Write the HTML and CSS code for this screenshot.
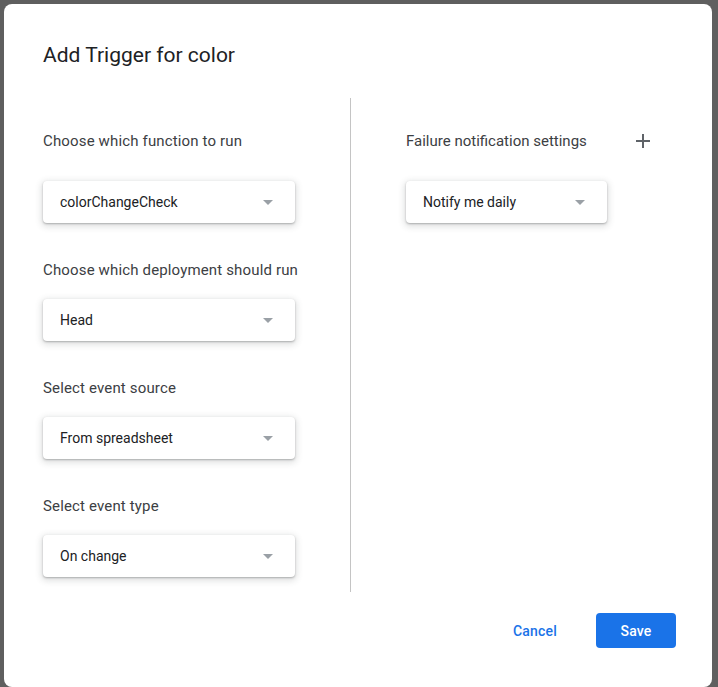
FILE: index.html
```html
<!DOCTYPE html>
<html>
<head>
<meta charset="utf-8">
<link rel="stylesheet" href="styles.css">
</head>
<body>
<div class="dialog">
  <h1 class="title">Add Trigger for color</h1>
  <div class="columns">
    <div class="col col-left">
      <div class="field field-first">
        <div class="label">Choose which function to run</div>
        <div class="select"><span>colorChangeCheck</span><span class="arrow"></span></div>
      </div>
      <div class="field">
        <div class="label">Choose which deployment should run</div>
        <div class="select"><span>Head</span><span class="arrow"></span></div>
      </div>
      <div class="field">
        <div class="label">Select event source</div>
        <div class="select"><span>From spreadsheet</span><span class="arrow"></span></div>
      </div>
      <div class="field">
        <div class="label">Select event type</div>
        <div class="select"><span>On change</span><span class="arrow"></span></div>
      </div>
    </div>
    <div class="divider"></div>
    <div class="col col-right">
      <div class="field field-first">
        <div class="label label-row">Failure notification settings
          <svg class="plus" width="14" height="14" viewBox="0 0 14 14"><path d="M7 0v14M0 7h14" stroke="#5f6368" stroke-width="2" fill="none"/></svg>
        </div>
        <div class="select select-short"><span>Notify me daily</span><span class="arrow"></span></div>
      </div>
    </div>
  </div>
  <div class="footer">
    <button class="btn btn-text">Cancel</button>
    <button class="btn btn-primary">Save</button>
  </div>
</div>
</body>
</html>
```

FILE: styles.css
```css
* { box-sizing: border-box; }
html, body { margin: 0; padding: 0; }
body {
  background: #5f5f5f;
  width: 718px;
  height: 687px;
  overflow: hidden;
  padding: 4px 0 0 4px;
  font-family: Roboto, "Liberation Sans", Arial, sans-serif;
}
.dialog {
  width: 708px;
  height: 683px;
  background: #fff;
  border-radius: 8px;
  padding: 0 36px 0 39px;
  display: flex;
  flex-direction: column;
}
.title {
  margin: 0;
  padding-top: 39px;
  font-size: 21px;
  line-height: 24px;
  font-weight: 400;
  color: #202124;
  height: 94px;
}
.columns {
  display: flex;
  height: 494px;
}
.col {
  display: flex;
  flex-direction: column;
  padding-top: 32px;
  gap: 36px;
}
.col-left { width: 307px; padding-right: 55px; }
.col-right { padding-left: 55px; flex: 1; }
.divider {
  width: 1px;
  background: #c4c4c4;
}
.field { display: flex; flex-direction: column; gap: 18px; }
.field-first { gap: 29px; }
.label {
  font-size: 15px;
  line-height: 22px;
  color: #3c4043;
  white-space: nowrap;
  letter-spacing: .15px;
}
.label-row {
  display: flex;
  align-items: center;
  gap: 49px;
  letter-spacing: 0;
}
.select {
  width: 252px;
  height: 42px;
  border-radius: 4px;
  background: #fff;
  box-shadow: 0 1px 2px rgba(60,64,67,.35), 0 2px 6px 2px rgba(60,64,67,.15);
  display: flex;
  align-items: center;
  justify-content: space-between;
  padding: 0 22px 0 17px;
  font-size: 14px;
  color: #202124;
}
.select-short { width: 201px; }
.arrow {
  width: 0;
  height: 0;
  border-left: 5px solid transparent;
  border-right: 5px solid transparent;
  border-top: 5px solid #9aa0a6;
}
.footer {
  display: flex;
  justify-content: flex-end;
  align-items: center;
  gap: 15px;
  padding-top: 21px;
}
.btn {
  font-family: Roboto, "Liberation Sans", Arial, sans-serif;
  font-size: 14px;
  font-weight: 500;
  height: 35px;
  padding: 0 24px;
  border: none;
  border-radius: 4px;
  cursor: pointer;
  letter-spacing: .2px;
}
.btn-text { background: transparent; color: #1a73e8; }
.btn-primary { background: #1a73e8; color: #fff; width: 80px; }
```
